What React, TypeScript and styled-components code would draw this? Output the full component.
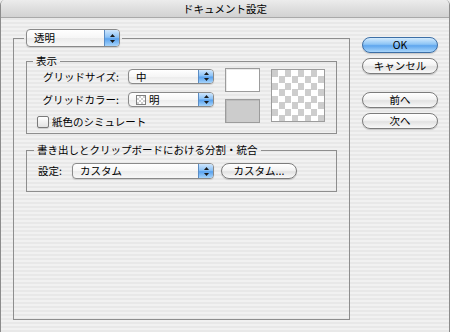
import React from 'react';
import styled, { createGlobalStyle } from 'styled-components';

const GlobalStyle = createGlobalStyle`
  html, body {
    margin: 0;
    padding: 0;
    background: #ececec;
  }
  body {
    font-family: 'Noto Sans CJK JP', 'Liberation Sans', sans-serif;
    font-size: 10.5px;
    color: #000;
  }
  * {
    box-sizing: border-box;
  }
`;

const Window = styled.div`
  width: 450px;
  height: 332px;
  display: flex;
  flex-direction: column;
  border-left: 1px solid #8c8c8c;
  border-right: 1px solid #8c8c8c;
  border-radius: 5px 5px 0 0;
  overflow: hidden;
  background: repeating-linear-gradient(
    to bottom,
    #f1f1f1 0px,
    #f1f1f1 2px,
    #e8e8e8 2px,
    #e8e8e8 4px
  );
`;

const TitleBar = styled.div`
  height: 18px;
  flex: none;
  display: flex;
  align-items: center;
  justify-content: center;
  border-bottom: 1px solid #a9a9a9;
  background: linear-gradient(to bottom, #ececec 0%, #dcdcdc 60%, #d2d2d2 100%);
  font-size: 10.5px;
  line-height: 12px;
`;

const Body = styled.div`
  flex: 1;
  display: flex;
  gap: 12px;
  padding: 11px 11px 12px 12px;
`;

const Group = styled.fieldset<{ $pad: string; $top?: number }>`
  margin: ${p => p.$top || 0}px 0 0 0;
  min-width: 0;
  border: 1px solid #8e8e8e;
  padding: ${p => p.$pad};
`;

const OuterGroup = styled(Group)`
  width: 337px;
  flex: none;
`;

const Legend = styled.legend<{ $shift: number }>`
  margin-left: ${p => p.$shift}px;
  padding: 0 3px;
  line-height: 12px;
`;

const PopupLegend = styled.legend`
  margin-left: -2px;
  padding: 0 2px;
  line-height: 0;
`;

const Popup = styled.div<{ $width: number; $height: number }>`
  width: ${p => p.$width}px;
  height: ${p => p.$height}px;
  display: flex;
  align-items: stretch;
  border: 1px solid #8a8a8a;
  border-radius: 4px;
  overflow: hidden;
  background: linear-gradient(to bottom, #ffffff 0%, #f6f6f6 50%, #ebebeb 51%, #f8f8f8 100%);
  box-shadow: 0 1px 1px rgba(0, 0, 0, 0.12);
`;

const PopupText = styled.div`
  flex: 1;
  display: flex;
  align-items: center;
  gap: 3px;
  padding-left: 7px;
  line-height: 12px;
  white-space: nowrap;
`;

const PopupArrows = styled.div`
  width: 15px;
  flex: none;
  display: flex;
  align-items: center;
  justify-content: center;
  border-left: 1px solid #5a8cc4;
  background: linear-gradient(to bottom, #cfe6fc 0%, #8cc2f6 45%, #5aa2ee 55%, #a6d4fb 100%);
`;

const ArrowIcon = () => (
  <svg width="5" height="9" viewBox="0 0 5 9">
    <path d="M2.5 0 L5 3 L0 3 Z" fill="#1a1a1a" />
    <path d="M0 6 L5 6 L2.5 9 Z" fill="#1a1a1a" />
  </svg>
);

const MiniChecker = styled.span`
  width: 10px;
  height: 10px;
  border: 1px solid #808080;
  background: conic-gradient(#cfcfcf 25%, #fff 0 50%, #cfcfcf 0 75%, #fff 0) 0 0 / 4px 4px;
`;

const Content = styled.div`
  display: flex;
  align-items: flex-start;
  padding-top: 1px;
`;

const LeftColumn = styled.div`
  display: flex;
  flex-direction: column;
  margin-top: 1px;
`;

const FieldRow = styled.div<{ $label: number; $gap: number }>`
  display: grid;
  grid-template-columns: ${p => p.$label}px;
  grid-auto-columns: max-content;
  grid-auto-flow: column;
  justify-content: start;
  column-gap: ${p => p.$gap}px;
  align-items: center;
  & + & {
    margin-top: 8px;
  }
`;

const Label = styled.span<{ $right?: boolean }>`
  text-align: ${p => (p.$right ? 'right' : 'left')};
  line-height: 12px;
  white-space: nowrap;
`;

const CheckRow = styled.label`
  display: flex;
  align-items: center;
  gap: 3px;
  margin-top: 9px;
  line-height: 12px;
`;

const CheckBox = styled.span`
  width: 12px;
  height: 12px;
  border: 1px solid #7a7a7a;
  border-radius: 2px;
  background: linear-gradient(to bottom, #ffffff, #e2e2e2);
  box-shadow: 0 1px 1px rgba(0, 0, 0, 0.15);
`;

const Swatches = styled.div`
  display: flex;
  flex-direction: column;
  gap: 7px;
  margin-left: 11px;
`;

const Swatch = styled.div<{ $color: string }>`
  width: 35px;
  height: 24px;
  background: ${p => p.$color};
  border: 1px solid #9c9c9c;
  box-shadow: inset 1px 1px 0 rgba(0, 0, 0, 0.08);
`;

const Checker = styled.div`
  width: 54px;
  height: 53px;
  margin-left: 11px;
  margin-top: 1px;
  border: 1px solid #9c9c9c;
  background: conic-gradient(#fff 25%, #cdcdcd 0 50%, #fff 0 75%, #cdcdcd 0) 0 0 / 13px 13px;
`;

const ButtonColumn = styled.div`
  width: 76px;
  flex: none;
  display: flex;
  flex-direction: column;
  padding-top: 8px;
`;

const AquaButton = styled.div<{ $primary?: boolean; $gap?: number; $width?: number }>`
  width: ${p => p.$width || 76}px;
  height: 16px;
  margin-top: ${p => p.$gap || 0}px;
  display: flex;
  align-items: center;
  justify-content: center;
  border-radius: 8px;
  border: 1px solid ${p => (p.$primary ? '#3d6fa6' : '#7c7c7c')};
  background: ${p =>
    p.$primary
      ? 'linear-gradient(to bottom, #d4ebfd 0%, #8cc4f5 45%, #5ea6ee 55%, #a9d6fb 100%)'
      : 'linear-gradient(to bottom, #ffffff 0%, #f3f3f3 45%, #e2e2e2 55%, #f9f9f9 100%)'};
  box-shadow: 0 1px 1px rgba(0, 0, 0, 0.18);
  font-size: 10.5px;
  line-height: 12px;
  white-space: nowrap;
`;

const App = () => (
  <>
    <GlobalStyle />
    <Window>
      <TitleBar>ドキュメント設定</TitleBar>
      <Body>
        <OuterGroup $pad="8px 12px 0 12px">
          <PopupLegend>
            <Popup $width={94} $height={18}>
              <PopupText>透明</PopupText>
              <PopupArrows>
                <ArrowIcon />
              </PopupArrows>
            </Popup>
          </PopupLegend>

          <Group $pad="0 0 5px 10px">
            <Legend $shift={-4}>表示</Legend>
            <Content>
              <LeftColumn>
                <FieldRow $label={82} $gap={9}>
                  <Label $right>グリッドサイズ:</Label>
                  <Popup $width={86} $height={15}>
                    <PopupText>中</PopupText>
                    <PopupArrows>
                      <ArrowIcon />
                    </PopupArrows>
                  </Popup>
                </FieldRow>
                <FieldRow $label={82} $gap={9}>
                  <Label $right>グリッドカラー:</Label>
                  <Popup $width={86} $height={15}>
                    <PopupText>
                      <MiniChecker />
                      明
                    </PopupText>
                    <PopupArrows>
                      <ArrowIcon />
                    </PopupArrows>
                  </Popup>
                </FieldRow>
                <CheckRow>
                  <CheckBox />
                  紙色のシミュレート
                </CheckRow>
              </LeftColumn>
              <Swatches>
                <Swatch $color="#ffffff" />
                <Swatch $color="#cccccc" />
              </Swatches>
              <Checker />
            </Content>
          </Group>

          <Group $pad="7px 0 12px 11px" $top={10}>
            <Legend $shift={-4}>書き出しとクリップボードにおける分割・統合</Legend>
            <FieldRow $label={27} $gap={7}>
              <Label>設定:</Label>
              <Popup $width={142} $height={16}>
                <PopupText>カスタム</PopupText>
                <PopupArrows>
                  <ArrowIcon />
                </PopupArrows>
              </Popup>
              <AquaButton>カスタム...</AquaButton>
            </FieldRow>
          </Group>
        </OuterGroup>

        <ButtonColumn>
          <AquaButton $primary>OK</AquaButton>
          <AquaButton $gap={5}>キャンセル</AquaButton>
          <AquaButton $gap={18}>前へ</AquaButton>
          <AquaButton $gap={5}>次へ</AquaButton>
        </ButtonColumn>
      </Body>
    </Window>
  </>
);

export default App;
